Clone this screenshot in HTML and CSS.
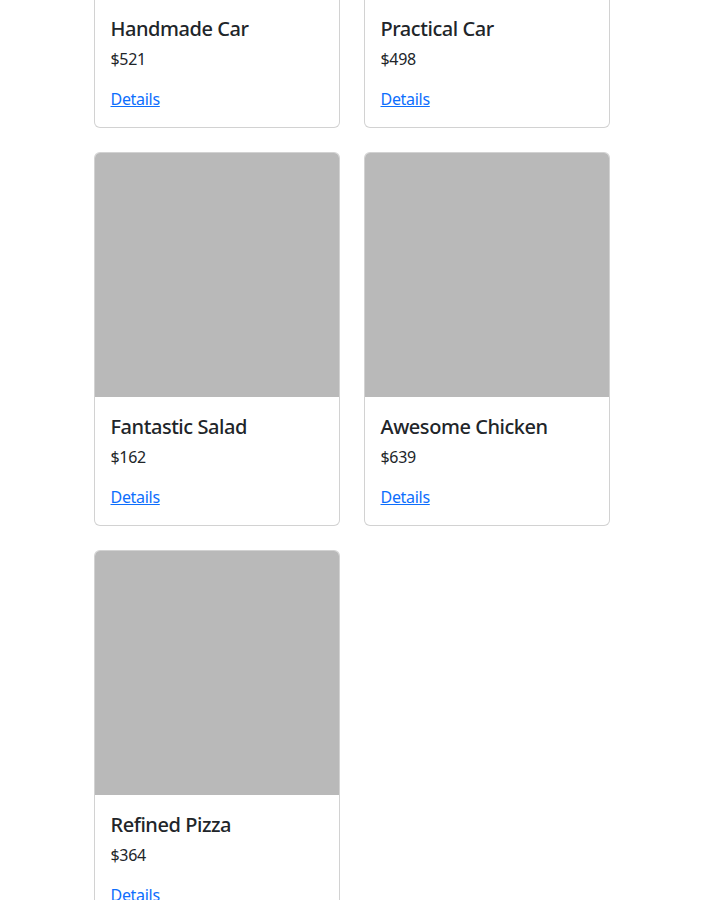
FILE: index.html
```html
<!DOCTYPE html>
<html lang="en">
<head>
<meta charset="utf-8">
<title>Products</title>
<link rel="stylesheet" href="styles.css">
</head>
<body>
<main class="container">
  <div class="grid">
    <div class="card">
      <div class="card-img"></div>
      <div class="card-body">
        <h5 class="card-title">Handmade Car</h5>
        <p class="card-text">$521</p>
        <a href="#" class="card-link">Details</a>
      </div>
    </div>
    <div class="card">
      <div class="card-img"></div>
      <div class="card-body">
        <h5 class="card-title">Practical Car</h5>
        <p class="card-text">$498</p>
        <a href="#" class="card-link">Details</a>
      </div>
    </div>
    <div class="card">
      <div class="card-img"></div>
      <div class="card-body">
        <h5 class="card-title">Fantastic Salad</h5>
        <p class="card-text">$162</p>
        <a href="#" class="card-link">Details</a>
      </div>
    </div>
    <div class="card">
      <div class="card-img"></div>
      <div class="card-body">
        <h5 class="card-title">Awesome Chicken</h5>
        <p class="card-text">$639</p>
        <a href="#" class="card-link">Details</a>
      </div>
    </div>
    <div class="card">
      <div class="card-img"></div>
      <div class="card-body">
        <h5 class="card-title">Refined Pizza</h5>
        <p class="card-text">$364</p>
        <a href="#" class="card-link">Details</a>
      </div>
    </div>
  </div>
</main>
</body>
</html>
```
FILE: styles.css
```css
html, body {
  margin: 0;
  padding: 0;
  background: #fff;
}
body {
  font-family: "Noto Sans", "Open Sans", sans-serif;
  font-size: 16px;
  line-height: 1.5;
  color: #212529;
  overflow: hidden;
}
.container {
  width: 516px;
  margin: -246px auto 0;
}
.grid {
  display: grid;
  grid-template-columns: 246px 246px;
  gap: 24px;
}
.card {
  border: 1px solid rgba(0, 0, 0, 0.175);
  border-radius: 6px;
  overflow: hidden;
  background: #fff;
}
.card-img {
  height: 244px;
  background: #b9b9b9;
}
.card-body {
  padding: 16px;
}
.card-title {
  margin: 0 0 6px;
  padding-top: 2px;
  font-size: 20px;
  font-weight: 500;
  line-height: 1.2;
  letter-spacing: -0.45px;
}
.card-text {
  margin: 0 0 16px;
  letter-spacing: -0.3px;
}
.card-link {
  color: #0d6efd;
  text-decoration: underline;
  letter-spacing: -0.3px;
}
```
